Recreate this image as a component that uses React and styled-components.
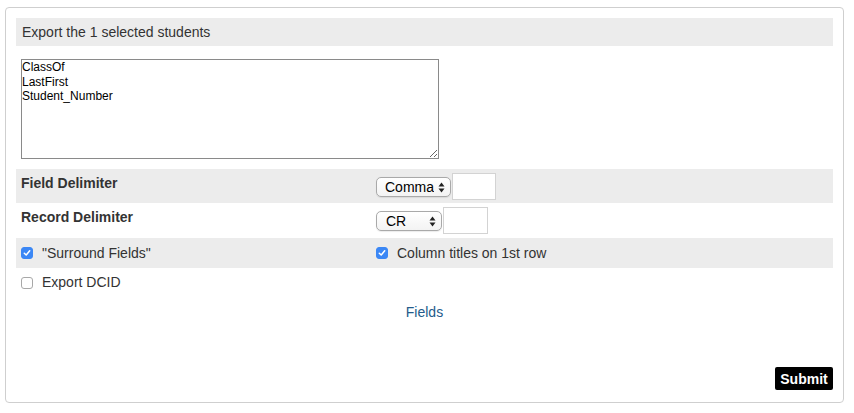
import React from "react";
import styled, { createGlobalStyle } from "styled-components";

const Global = createGlobalStyle`
  html, body { margin: 0; padding: 0; background: #fff; }
  body { font-family: "Liberation Sans", Arial, Helvetica, sans-serif; color: #333; }
  * { box-sizing: border-box; }
`;

const Box = styled.form`
  margin: 7px 10px 0 5px;
  width: 839px;
  height: 396px;
  border: 1px solid #cfcfcf;
  border-radius: 4px;
  padding: 10px 10px 12px 10px;
  display: flex;
  flex-direction: column;
`;

const Header = styled.div`
  height: 28px;
  background: #ececec;
  padding-left: 6px;
  font-size: 14px;
  line-height: 28px;
  color: #333;
`;

const FieldList = styled.textarea`
  margin: 13px 0 0 5px;
  width: 418px;
  height: 100px;
  border: 1px solid #8a8a8a;
  padding: 0 1px 2px 0;
  font-family: "Liberation Sans", Arial, sans-serif;
  font-size: 12px;
  line-height: 14.5px;
  color: #000;
  resize: both;
  outline: none;
`;

const Row = styled.div`
  display: grid;
  grid-template-columns: 360px 1fr;
  align-items: center;
  background: ${(p) => (p.$shaded ? "#ececec" : "transparent")};
  min-height: ${(p) => p.$h}px;
  margin-top: ${(p) => p.$mt || 0}px;
  padding: ${(p) => p.$pad || "0"};
`;

const Label = styled.div`
  align-self: start;
  padding: 2px 0 0 5px;
  font-size: 14px;
  font-weight: bold;
  line-height: 17px;
  color: #333;
`;

const Controls = styled.div`
  display: flex;
  align-items: center;
`;

const SelectWrap = styled.span`
  position: relative;
  display: inline-flex;
  align-items: center;
  width: ${(p) => p.$w}px;
  height: 20px;
  border: 1px solid #a9a9a9;
  border-radius: 5px;
  background: linear-gradient(#ffffff, #f3f3f3);
  box-shadow: 0 0.5px 1px rgba(0, 0, 0, 0.08);
`;

const Select = styled.select`
  appearance: none;
  -webkit-appearance: none;
  border: none;
  background: transparent;
  width: 100%;
  height: 100%;
  padding: 0 16px 0 ${(p) => p.$pl || 8}px;
  font-family: "Liberation Sans", Arial, sans-serif;
  font-size: 14px;
  color: #000;
  outline: none;
`;

const Arrows = styled.svg`
  position: absolute;
  right: 5px;
  top: 4px;
  pointer-events: none;
`;

const SmallInput = styled.input`
  width: ${(p) => p.$w}px;
  height: 27px;
  border: 1px solid #d3d3d3;
  margin: 0 0 0 1px;
  padding: 0 4px;
  font-size: 14px;
  outline: none;
`;

const Check = styled.label`
  display: flex;
  align-items: center;
  gap: 9px;
  padding-left: ${(p) => p.$pl || 0}px;
  font-size: 14px;
  color: #333;
  line-height: 17px;
`;

const Box12 = styled.span`
  width: 12px;
  height: 12px;
  border-radius: 3px;
  display: inline-flex;
  align-items: center;
  justify-content: center;
  background: ${(p) => (p.$on ? "#3b87f5" : "#fff")};
  border: 1px solid ${(p) => (p.$on ? "#3b87f5" : "#a8a8a8")};
`;

const LinkRow = styled.div`
  text-align: center;
  padding-top: 5px;
  font-size: 14px;
  line-height: 20px;
`;

const FieldsLink = styled.a`
  color: #245b8b;
  text-decoration: none;
`;

const Submit = styled.button`
  margin-top: auto;
  align-self: flex-end;
  width: 58px;
  height: 23px;
  background: #000;
  color: #fff;
  border: none;
  border-radius: 2px;
  font-family: "Liberation Sans", Arial, sans-serif;
  font-size: 14px;
  font-weight: bold;
  padding: 0;
`;

function ArrowIcon() {
  return (
    <Arrows width="7" height="11" viewBox="0 0 7 11">
      <path d="M3.5 0.5 L6.5 4.5 L0.5 4.5 Z" fill="#222" />
      <path d="M3.5 10.5 L6.5 6.5 L0.5 6.5 Z" fill="#222" />
    </Arrows>
  );
}

function CheckBox({ on }) {
  return (
    <Box12 $on={on}>
      {on && (
        <svg width="8" height="8" viewBox="0 0 8 8">
          <path d="M1.3 4.2 L3.2 6 L6.7 1.8" stroke="#fff" strokeWidth="1.5" fill="none" strokeLinecap="round" strokeLinejoin="round" />
        </svg>
      )}
    </Box12>
  );
}

function Dropdown({ w, value, options, pl }) {
  return (
    <SelectWrap $w={w}>
      <Select $pl={pl} defaultValue={value}>
        {options.map((o) => (
          <option key={o}>{o}</option>
        ))}
      </Select>
      <ArrowIcon />
    </SelectWrap>
  );
}

export default function App() {
  return (
    <>
      <Global />
      <Box onSubmit={(e) => e.preventDefault()}>
        <Header>Export the 1 selected students</Header>
        <FieldList defaultValue={"ClassOf\nLastFirst\nStudent_Number"} />
        <Row $shaded $h={34} $mt={10} $pad="4px 0 3px">
          <Label>Field Delimiter</Label>
          <Controls>
            <Dropdown w={75} value="Comma" options={["Tab", "Comma", "Semicolon"]} pl={8} />
            <SmallInput $w={44} />
          </Controls>
        </Row>
        <Row $h={35} $pad="4px 0 4px">
          <Label>Record Delimiter</Label>
          <Controls>
            <Dropdown w={66} value="CR" options={["CR", "LF", "CRLF"]} pl={9} />
            <SmallInput $w={45} />
          </Controls>
        </Row>
        <Row $shaded $h={30}>
          <Check $pl={5}>
            <CheckBox on />
            "Surround Fields"
          </Check>
          <Check>
            <CheckBox on />
            Column titles on 1st row
          </Check>
        </Row>
        <Row $h={29}>
          <Check $pl={5}>
            <CheckBox />
            Export DCID
          </Check>
        </Row>
        <LinkRow>
          <FieldsLink href="#">Fields</FieldsLink>
        </LinkRow>
        <Submit type="submit">Submit</Submit>
      </Box>
    </>
  );
}
